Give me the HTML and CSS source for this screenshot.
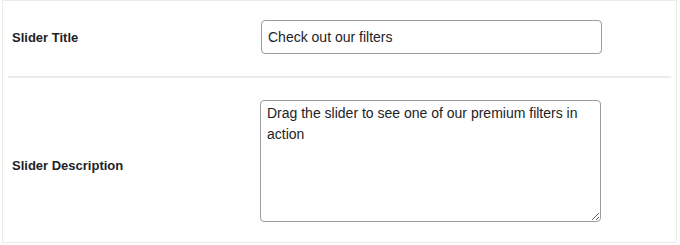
FILE: index.html
```html
<!DOCTYPE html>
<html>
<head>
<meta charset="utf-8">
<link rel="stylesheet" href="styles.css">
</head>
<body>
<div class="panel">
  <div class="row row-title">
    <label class="label" for="t">Slider Title</label>
    <input id="t" class="field" type="text" value="Check out our filters">
  </div>
  <div class="row row-desc">
    <label class="label label-desc" for="d">Slider Description</label>
    <textarea id="d" class="field area">Drag the slider to see one of our premium filters in action</textarea>
  </div>
</div>
</body>
</html>
```
FILE: styles.css
```css
html, body {
  margin: 0;
  padding: 0;
  background: #ffffff;
}
body {
  font-family: "Liberation Sans", Arial, sans-serif;
  color: #1d2327;
}
.panel {
  margin-left: 2px;
  width: 675px;
  height: 243px;
  border: 1px solid #ebebeb;
  box-sizing: border-box;
  background: #fff;
}
.row {
  margin: 0 5px;
  display: grid;
  grid-template-columns: 252px 341px;
  align-items: center;
  box-sizing: border-box;
}
.row-title {
  padding: 19px 0 22px;
  border-bottom: 2px solid #ececec;
}
.row-desc {
  padding: 22px 0 20px;
}
.label {
  padding-left: 4px;
  font-size: 13px;
  font-weight: 700;
  color: #1d2327;
}
.label-desc {
  padding-top: 8px;
}
.field {
  box-sizing: border-box;
  width: 341px;
  margin: 0;
  border: 1px solid #9a9da1;
  border-radius: 4px;
  font-family: "Liberation Sans", Arial, sans-serif;
  font-size: 14px;
  color: #1d2327;
  background: #fff;
  outline: none;
  display: block;
}
input.field {
  height: 34px;
  padding: 0 6px;
  margin-left: 1px;
}
.area {
  height: 122px;
  padding: 2px 6px;
  line-height: 21px;
  resize: both;
}
```
